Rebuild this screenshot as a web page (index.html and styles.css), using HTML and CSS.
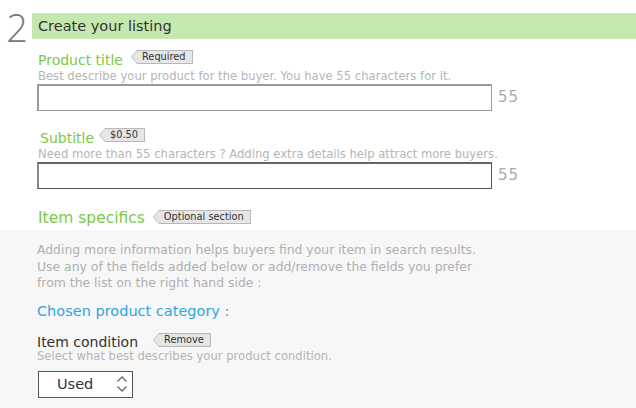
FILE: index.html
```html
<!DOCTYPE html>
<html>
<head>
<meta charset="utf-8">
<link rel="stylesheet" href="styles.css">
</head>
<body>
<div class="step">
  <div class="step-num">2</div>
  <div class="step-bar">Create your listing</div>
</div>

<div class="section">
  <div class="field">
    <div class="label-row"><span class="label">Product title</span><span class="tag tag-req">Required</span></div>
    <div class="help">Best describe your product for the buyer. You have 55 characters for it.</div>
    <div class="input-row"><input class="text-input light" type="text"><span class="count">55</span></div>
  </div>

  <div class="field field-sub">
    <div class="label-row"><span class="label sub">Subtitle</span><span class="tag tag-price">$0.50</span></div>
    <div class="help">Need more than 55 characters ? Adding extra details help attract more buyers.</div>
    <div class="input-row"><input class="text-input dark" type="text"><span class="count">55</span></div>
  </div>

  <div class="label-row specifics"><span class="label big">Item specifics</span><span class="tag tag-opt">Optional section</span></div>
</div>

<div class="grey">
  <p class="intro">Adding more information helps buyers find your item in search results.<br>Use any of the fields added below or add/remove the fields you prefer<br>from the list on the right hand side :</p>
  <div class="category">Chosen product category :</div>
  <div class="label-row cond"><span class="label dark-label">Item condition</span><span class="tag tag-remove">Remove</span></div>
  <div class="help help-cond">Select what best describes your product condition.</div>
  <div class="select">
    <span>Used</span>
    <svg class="chev" width="12" height="18" viewBox="0 0 12 18"><path d="M1.5 6.5 L6 2 L10.5 6.5 M1.5 11.5 L6 16 L10.5 11.5" fill="none" stroke="#666" stroke-width="1.3"/></svg>
  </div>
</div>
</body>
</html>
```

FILE: styles.css
```css
html, body {
  margin: 0;
  padding: 0;
  background: #fff;
  font-family: "DejaVu Sans", Verdana, sans-serif;
  width: 636px;
  height: 408px;
  overflow: hidden;
}

body {
  display: flex;
  flex-direction: column;
}

.step {
  display: flex;
  align-items: center;
  margin-top: 13px;
  height: 26px;
  flex: none;
}

.step-num {
  width: 32px;
  text-align: center;
  font-family: "Open Sans", sans-serif;
  font-weight: 300;
  font-size: 38px;
  line-height: 26px;
  color: #777;
  position: relative;
  top: 1px;
  left: 1px;
}

.step-bar {
  flex: 1;
  height: 26px;
  background: #c5e8ae;
  color: #333;
  font-size: 14.5px;
  line-height: 26px;
  padding-left: 6px;
}

.section {
  padding-left: 38px;
  flex: none;
}

.field {
  margin-top: 12px;
}

.field-sub {
  margin-top: 18px;
}

.label-row {
  display: flex;
  align-items: center;
  height: 18px;
}

.label {
  color: #7cc84a;
  font-size: 14px;
  line-height: 18px;
}

.label.sub {
  margin-left: 2px;
}

.label.big {
  font-size: 15.5px;
}

.tag {
  position: relative;
  display: inline-block;
  height: 12px;
  line-height: 12px;
  font-size: 9.8px;
  color: #333;
  background: #e6e6e6;
  border: 1px solid #b8b8b8;
  border-left: none;
  padding: 0 6px 0 5px;
  margin-left: 12px;
  margin-top: -6px;
}

.tag::before {
  content: "";
  position: absolute;
  left: -6px;
  top: -1px;
  width: 0;
  height: 0;
  border-top: 7px solid transparent;
  border-bottom: 7px solid transparent;
  border-right: 6px solid #b8b8b8;
}

.tag::after {
  content: "";
  position: absolute;
  left: -5px;
  top: 0;
  width: 0;
  height: 0;
  border-top: 6px solid transparent;
  border-bottom: 6px solid transparent;
  border-right: 5px solid #e6e6e6;
}

.tag-req { margin-left: 14px; }
.tag-price { margin-left: 11px; }
.tag-opt { margin-left: 14px; margin-top: -3px; }
.tag-remove { margin-left: 21px; margin-top: -4px; }

.help {
  color: #b5b5b5;
  font-size: 11.6px;
  line-height: 14px;
  margin-top: 0;
}

.help-cond {
  margin-top: -2px;
}

.input-row {
  display: flex;
  align-items: center;
  margin-top: 1px;
  margin-left: -1px;
}

.text-input {
  box-sizing: border-box;
  width: 455px;
  height: 27px;
  margin: 0;
  padding: 0;
  background: #fff;
  outline: none;
}

.text-input.light {
  border: 2px solid #9a9a9a;
  border-right-width: 1px;
  border-bottom-width: 1px;
}

.text-input.dark {
  border: 1px solid #555;
  border-left: 2px solid #888;
  border-top: 2px solid #666;
}

.count {
  color: #aaa;
  font-size: 15px;
  margin-left: 6px;
  letter-spacing: 1px;
  position: relative;
  top: -1px;
}

.specifics {
  margin-top: 19px;
  height: 20px;
}

.grey {
  flex: 1;
  min-height: 0;
  overflow: hidden;
  background: #f7f7f7;
  margin-top: 2px;
  padding: 12px 0 0 37px;
}

.intro {
  margin: 0;
  color: #b0b0b0;
  font-size: 12.4px;
  line-height: 16.5px;
}

.category {
  color: #2ea6de;
  font-size: 14.5px;
  margin-top: 10px;
  line-height: 18px;
}

.cond {
  margin-top: 13px;
}

.dark-label {
  color: #333;
  font-size: 14px;
}

.select {
  box-sizing: border-box;
  width: 95px;
  height: 27px;
  margin-top: 8px;
  margin-left: 1px;
  border: 1.5px solid #555;
  background: #fff;
  display: flex;
  align-items: center;
  justify-content: space-between;
  padding: 0 4px 0 18px;
  font-size: 14.5px;
  color: #333;
}

.chev {
  display: block;
}
```
